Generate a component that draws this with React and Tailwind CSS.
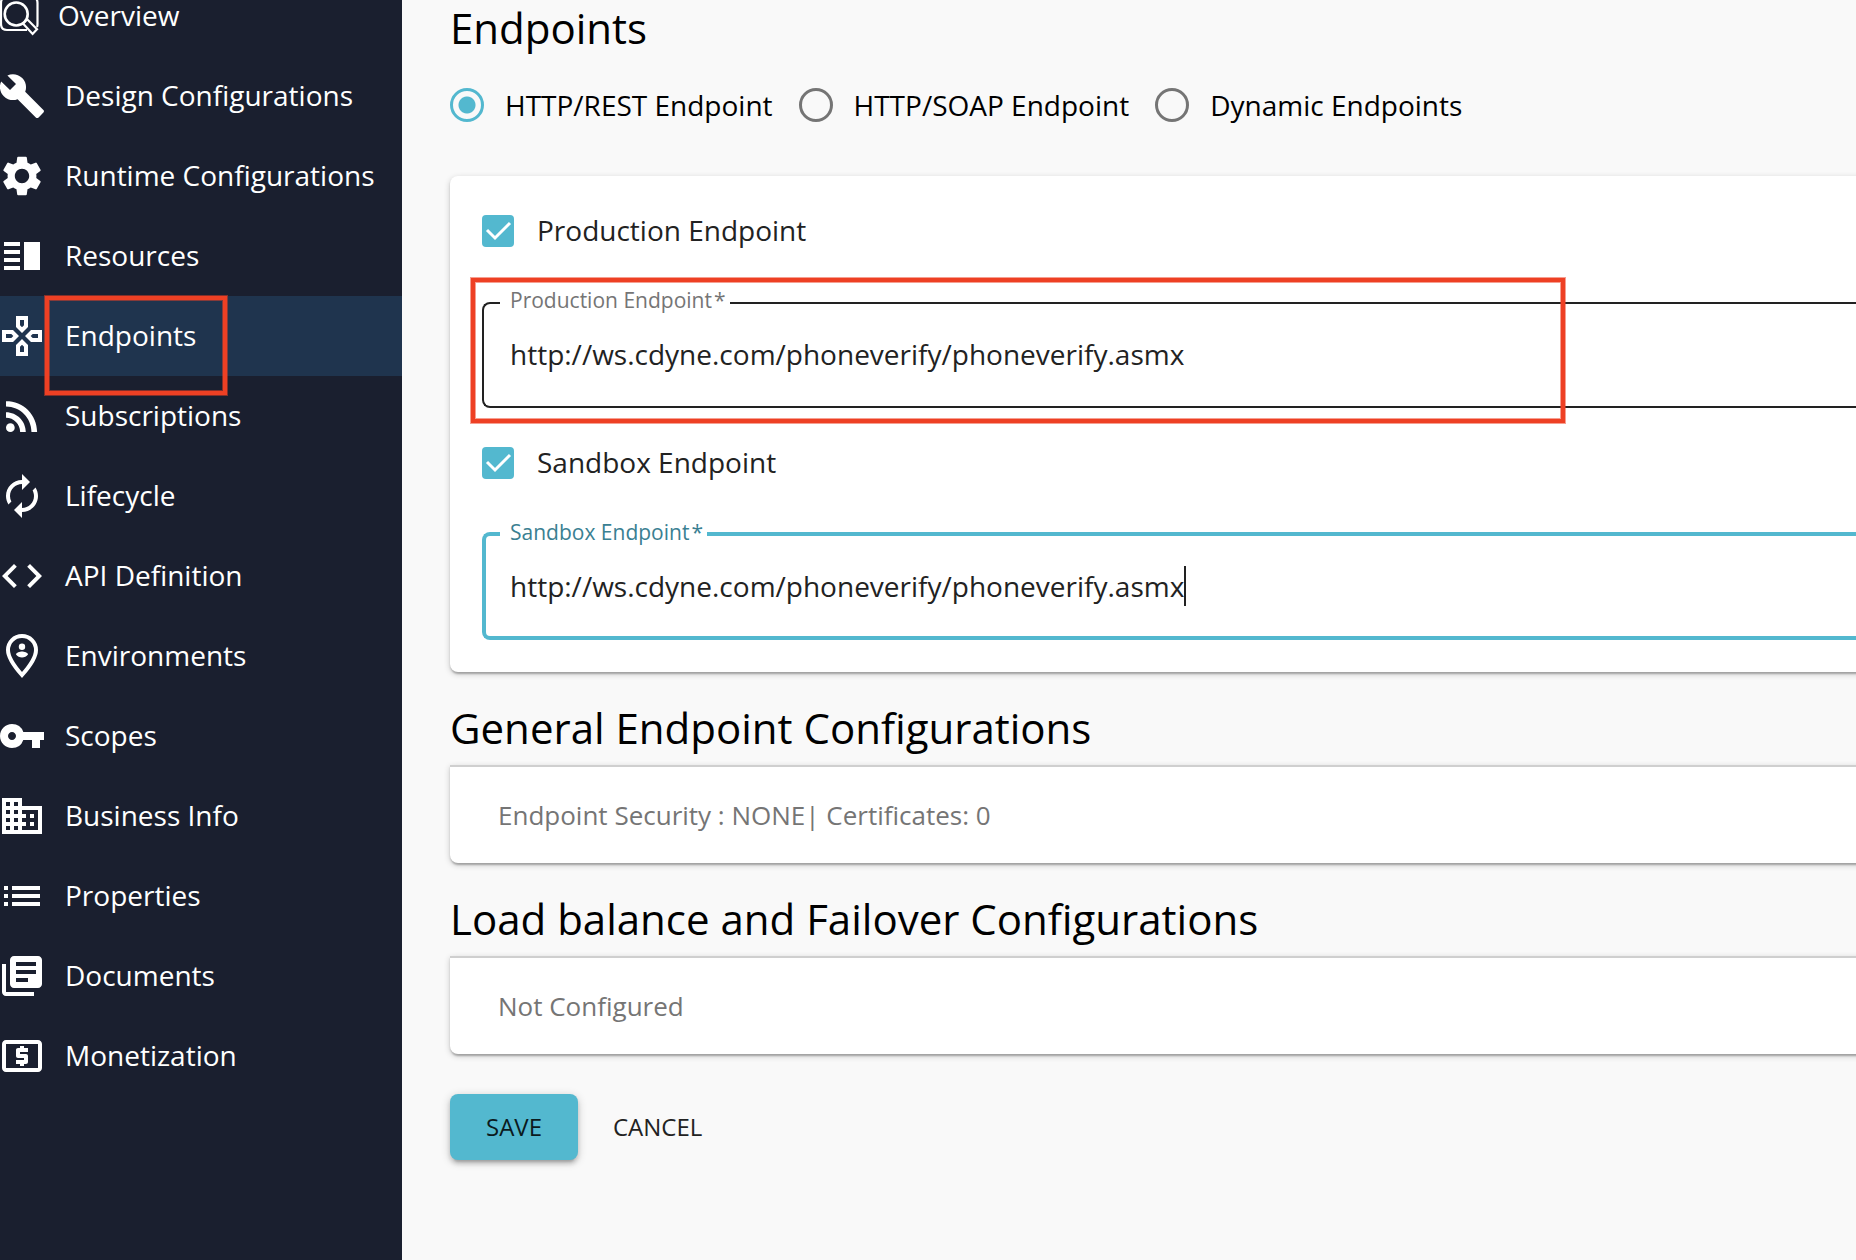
import { useState } from "react";
import {
  MdBuild,
  MdSettings,
  MdVerticalSplit,
  MdOutlineGamepad,
  MdRssFeed,
  MdAutorenew,
  MdCode,
  MdVpnKey,
  MdBusiness,
  MdList,
  MdLibraryBooks,
  MdLocalAtm,
} from "react-icons/md";

function OverviewIcon() {
  return (
    <svg viewBox="0 0 40 40" className="size-10 shrink-0" fill="none" stroke="currentColor" strokeWidth="2.2">
      <path d="M27 34H7Q1 34 1 28V7Q1 1 7 1H31.500Q37.500 1 37.500 7V28Q37.500 30 37 31" />
      <circle cx="16.200" cy="18" r="11.500" strokeWidth="2.600" />
      <path d="M23 27.500L27.200 23.300L37 33.300L32.600 38Z" />
    </svg>
  );
}

function PersonPinIcon({ className }) {
  return (
    <svg viewBox="0 0 24 24" className={className} fill="currentColor">
      <path
        d="M12 2C8.100 2 5 5.100 5 9c0 4.500 4.500 9.700 7 12.500C14.500 18.700 19 13.500 19 9c0-3.900-3.100-7-7-7z"
        fill="none"
        stroke="currentColor"
        strokeWidth="2"
      />
      <circle cx="12" cy="7.400" r="1.600" />
      <path d="M9 11.300c0-1 2-1.500 3-1.500s3 .5 3 1.500c-.7.900-1.800 1.500-3 1.500s-2.300-.6-3-1.500z" />
    </svg>
  );
}

const NAV = [
  { label: "Design Configurations", Icon: MdBuild },
  { label: "Runtime Configurations", Icon: MdSettings },
  { label: "Resources", Icon: MdVerticalSplit },
  { label: "Endpoints", Icon: MdOutlineGamepad, active: true },
  { label: "Subscriptions", Icon: MdRssFeed },
  { label: "Lifecycle", Icon: MdAutorenew },
  { label: "API Definition", Icon: MdCode },
  { label: "Environments", Icon: PersonPinIcon },
  { label: "Scopes", Icon: MdVpnKey },
  { label: "Business Info", Icon: MdBusiness },
  { label: "Properties", Icon: MdList },
  { label: "Documents", Icon: MdLibraryBooks },
  { label: "Monetization", Icon: MdLocalAtm },
];

function Highlight({ className }) {
  return (
    <span
      aria-hidden="true"
      className={
        "pointer-events-none absolute z-10 border-4 border-[#ee4024] shadow-[0_0_0_1px_rgba(238,64,36,0.5),inset_0_0_0_1px_rgba(238,64,36,0.5)] " +
        className
      }
    />
  );
}

function Sidebar() {
  return (
    <nav className="w-[402px] shrink-0 bg-[#1a1f2f] text-[28px] leading-[30px] text-white">
      <a href="#overview" className="-mt-6 flex h-20 items-center gap-[18px]">
        <OverviewIcon />
        <span className="pb-0.5">Overview</span>
      </a>
      {NAV.map(({ label, Icon, active }) => (
        <a
          key={label}
          href={"#" + label.toLowerCase().replace(" ", "-")}
          className={"relative flex h-20 items-center gap-[19px] " + (active ? "bg-[#1f344e]" : "")}
        >
          <Icon className="-ml-0.5 size-12 shrink-0" />
          <span className="pb-0.5">{label}</span>
          {active && <Highlight className="left-[45px] top-0 h-[99px] w-[182px]" />}
        </a>
      ))}
    </nav>
  );
}

function RadioOption({ id, label, selected, onSelect }) {
  return (
    <label htmlFor={id} className="flex items-center gap-[21px]">
      <input
        id={id}
        type="radio"
        name="endpoint-type"
        checked={selected}
        onChange={onSelect}
        className="size-[34px] shrink-0 appearance-none rounded-full border-3 border-[#757575] checked:border-[#53b8cf] checked:bg-[radial-gradient(circle,#53b8cf_8px,transparent_9px)]"
      />
      {label}
    </label>
  );
}

function CheckOption({ id, label, checked, onChange }) {
  return (
    <label htmlFor={id} className="flex items-center gap-[23px] text-[28px] text-[#222]">
      <span className="grid">
        <input
          id={id}
          type="checkbox"
          checked={checked}
          onChange={onChange}
          className="peer col-start-1 row-start-1 size-8 appearance-none rounded-sm border-3 border-[#757575] checked:border-0 checked:bg-[#53b8cf]"
        />
        <svg
          viewBox="0 0 32 32"
          className="pointer-events-none invisible col-start-1 row-start-1 size-8 peer-checked:visible"
          fill="none"
          stroke="#fff"
          strokeWidth="3"
        >
          <path d="M5 15L13 23L28 8" />
        </svg>
      </span>
      <span className="pb-0.5 leading-10">{label}</span>
    </label>
  );
}

function EndpointField({ id, label, value, onChange, focused }) {
  return (
    <div
      className={
        "relative flex items-center rounded-l-lg border-r-0 " +
        (focused ? "h-[108px] border-4 border-[#53b8cf] pl-6" : "h-[106px] border-2 border-[#222] pb-0.5 pl-[26px]")
      }
    >
      <label
        htmlFor={id}
        className={
          "absolute -top-5 bg-white pl-2.5 pr-1 text-[21px] leading-8 " +
          (focused ? "left-3.5 text-[#3a8092]" : "left-4 text-[#757575]")
        }
      >
        {label}
        <span className="pl-0.5">*</span>
      </label>
      <input
        id={id}
        type="text"
        required
        value={value}
        onChange={onChange}
        className={"bg-transparent text-[28px] text-[#222] outline-none " + (focused ? "field-sizing-content" : "w-full")}
      />
      {focused && <span aria-hidden="true" className="h-10 w-0.5 bg-[#222]" />}
    </div>
  );
}

const CARD_SHADOW = "shadow-[0_2px_6px_rgba(0,0,0,0.2),0_2px_2px_rgba(0,0,0,0.14),0_4px_2px_-2px_rgba(0,0,0,0.12)]";

function SummarySection({ title, children }) {
  return (
    <section>
      <h2 className="text-[42px] leading-14 text-black">{title}</h2>
      <div
        className={
          "-mr-4 mt-[9px] flex h-[98px] items-center rounded-bl-lg border-t-2 border-[#cfcfcf] bg-white pl-12 text-[26px] text-[#757575] " +
          CARD_SHADOW
        }
      >
        {children}
      </div>
    </section>
  );
}

const TYPES = [
  { id: "rest", label: "HTTP/REST Endpoint" },
  { id: "soap", label: "HTTP/SOAP Endpoint" },
  { id: "dynamic", label: "Dynamic Endpoints" },
];

export default function App() {
  const [type, setType] = useState("rest");
  const [prodOn, setProdOn] = useState(true);
  const [sandOn, setSandOn] = useState(true);
  const [prod, setProd] = useState("http://ws.cdyne.com/phoneverify/phoneverify.asmx");
  const [sand, setSand] = useState("http://ws.cdyne.com/phoneverify/phoneverify.asmx");

  return (
    <div className="flex min-h-screen overflow-hidden bg-[#f9f9f9] font-['Open_Sans',sans-serif]">
      <Sidebar />
      <main className="min-w-0 flex-1 pl-12">
        <h1 className="text-[42px] leading-14 text-black">Endpoints</h1>
        <div className="mt-[25px] flex items-center gap-[26px] text-[28px] leading-12 text-black">
          {TYPES.map((t) => (
            <RadioOption
              key={t.id}
              id={t.id}
              label={t.label}
              selected={type === t.id}
              onSelect={() => setType(t.id)}
            />
          ))}
        </div>

        <section className={"-mr-4 mt-[47px] rounded-l-lg bg-white pb-8 pl-8 pt-[34px] " + CARD_SHADOW}>
          <CheckOption
            id="prod-on"
            label="Production Endpoint"
            checked={prodOn}
            onChange={(e) => setProdOn(e.target.checked)}
          />
          <div className="relative mt-[50px]">
            <EndpointField
              id="prod-url"
              label="Production Endpoint"
              value={prod}
              onChange={(e) => setProd(e.target.value)}
            />
            <Highlight className="-left-[11px] -top-6 h-[145px] w-[1094px]" />
          </div>
          <div className="mt-[34px]">
            <CheckOption
              id="sand-on"
              label="Sandbox Endpoint"
              checked={sandOn}
              onChange={(e) => setSandOn(e.target.checked)}
            />
          </div>
          <div className="mt-12">
            <EndpointField
              id="sand-url"
              label="Sandbox Endpoint"
              value={sand}
              onChange={(e) => setSand(e.target.value)}
              focused
            />
          </div>
        </section>

        <div className="mt-7 flex flex-col gap-7">
          <SummarySection title="General Endpoint Configurations">
            Endpoint Security : NONE| Certificates: 0
          </SummarySection>
          <SummarySection title="Load balance and Failover Configurations">Not Configured</SummarySection>
        </div>

        <div className="mt-10 flex items-center gap-[35px]">
          <button
            type="button"
            className="h-[66px] w-32 rounded-lg bg-[#53b8cf] text-2xl text-[#0b1a1e] shadow-[0_2px_10px_rgba(0,0,0,0.2),0_4px_4px_rgba(0,0,0,0.14),0_6px_2px_-4px_rgba(0,0,0,0.12)]"
          >
            SAVE
          </button>
          <button type="button" className="h-[66px] text-2xl text-[#222]">
            CANCEL
          </button>
        </div>
      </main>
    </div>
  );
}
